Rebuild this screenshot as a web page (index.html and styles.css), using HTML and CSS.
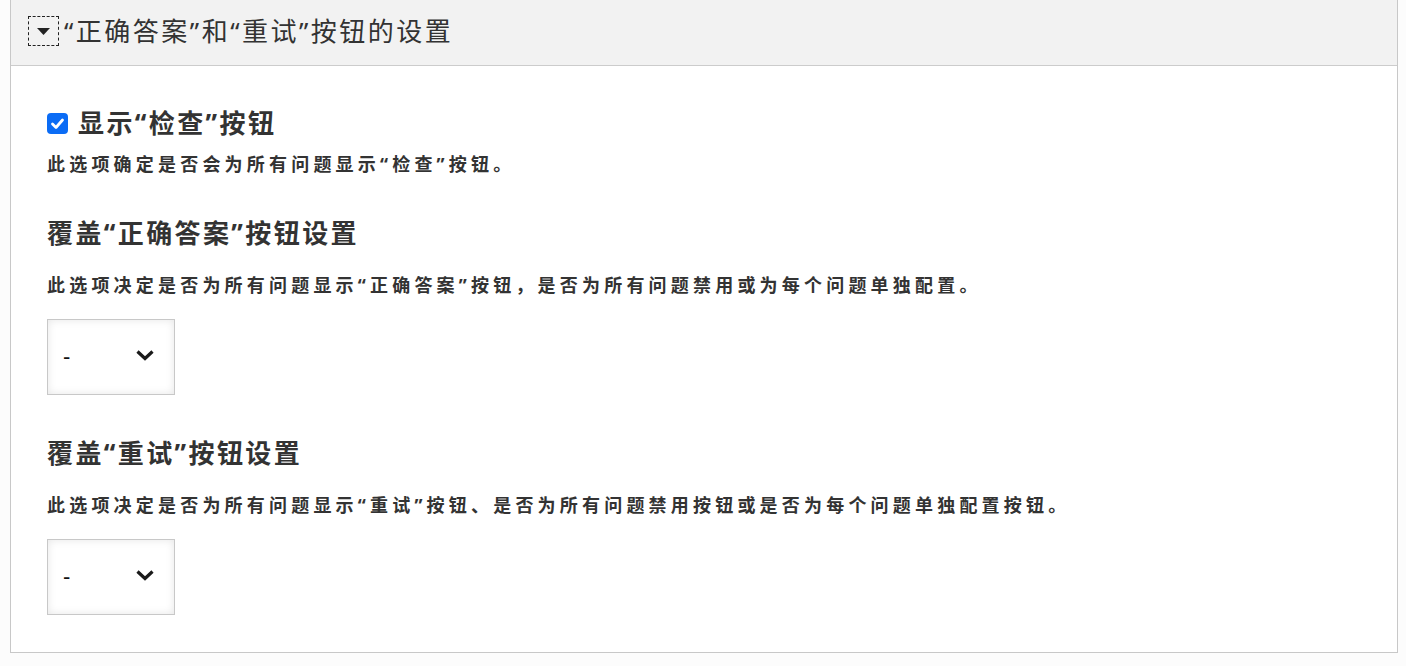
FILE: index.html
```html
<!DOCTYPE html>
<html lang="zh-CN">
<head>
<meta charset="utf-8">
<link rel="stylesheet" href="styles.css">
</head>
<body>
<div class="panel">
  <div class="panel-head">
    <span class="toggle"><svg width="13" height="8" viewBox="0 0 13 8"><polygon points="0,0 13,0 6.5,7" fill="#222"/></svg></span>
    <span class="head-title">“正确答案”和“重试”按钮的设置</span>
  </div>
  <div class="panel-body">
    <div class="field field-check">
      <label class="check-label">
        <span class="checkbox"><svg width="21" height="21" viewBox="0 0 21 21"><rect x="0" y="0" width="21" height="21" rx="4" fill="#0b6cf5"/><polyline points="5.5,11 9,14.5 15.5,7" fill="none" stroke="#fff" stroke-width="2.8" stroke-linecap="round" stroke-linejoin="round"/></svg></span>
        <span class="title">显示“检查”按钮</span>
      </label>
      <p class="desc">此选项确定是否会为所有问题显示“检查”按钮。</p>
    </div>
    <div class="field">
      <div class="title">覆盖“正确答案”按钮设置</div>
      <p class="desc">此选项决定是否为所有问题显示“正确答案”按钮，是否为所有问题禁用或为每个问题单独配置。</p>
      <div class="select"><span class="select-value">-</span><svg class="chev" width="20" height="12" viewBox="0 0 20 12"><polyline points="2.5,2.5 10,9.5 17.5,2.5" fill="none" stroke="#1a1a1a" stroke-width="3.2" stroke-linejoin="miter"/></svg></div>
    </div>
    <div class="field">
      <div class="title">覆盖“重试”按钮设置</div>
      <p class="desc">此选项决定是否为所有问题显示“重试”按钮、是否为所有问题禁用按钮或是否为每个问题单独配置按钮。</p>
      <div class="select"><span class="select-value">-</span><svg class="chev" width="20" height="12" viewBox="0 0 20 12"><polyline points="2.5,2.5 10,9.5 17.5,2.5" fill="none" stroke="#1a1a1a" stroke-width="3.2" stroke-linejoin="miter"/></svg></div>
    </div>
  </div>
</div>
</body>
</html>
```
FILE: styles.css
```css
html, body {
  margin: 0;
  padding: 0;
  background: #fcfcfc;
}
body {
  font-family: "Noto Sans", "Noto Sans CJK SC", sans-serif;
  color: #333;
}
.panel {
  margin: 0 8px 0 10px;
  height: 653px;
  box-sizing: border-box;
  border: 1px solid #c8c8c8;
  border-top: none;
  background: #fff;
}
.panel-head {
  height: 66px;
  box-sizing: border-box;
  border-bottom: 1px solid #cccccc;
  background: #f2f2f2;
  display: flex;
  align-items: center;
  padding-left: 17px;
}
.toggle {
  width: 29px;
  height: 28px;
  border: 1px dashed #222;
  display: flex;
  align-items: center;
  justify-content: center;
  margin-right: 5px;
  margin-top: -3px;
}
.toggle svg { display: block; margin-top: 1px; }
.head-title {
  font-size: 26px;
  font-weight: 400;
  color: #333;
  letter-spacing: 2.5px;
  line-height: 36px;
  margin-top: -3px;
}
.panel-body {
  padding: 39px 0 0 36px;
  display: flex;
  flex-direction: column;
}
.field { margin-bottom: 40px; }
.check-label {
  display: flex;
  align-items: center;
  gap: 10px;
}
.field-check { margin-bottom: 38px; }
.checkbox { width: 21px; height: 21px; display: block; }
.checkbox svg { display: block; }
.title {
  font-size: 26px;
  font-weight: 700;
  letter-spacing: 2.4px;
  line-height: 36px;
  color: #333;
}
.desc {
  margin: 21px 0 0 0;
  font-size: 18px;
  font-weight: 700;
  letter-spacing: 4.2px;
  line-height: 26px;
  color: #333;
}
.field-check .desc { margin-top: 10px; }
.select {
  margin-top: 21px;
  width: 128px;
  height: 76px;
  box-sizing: border-box;
  border: 1px solid #c8c8c8;
  background: #fff;
  box-shadow: inset 0 0 8px rgba(0,0,0,0.10);
  display: flex;
  align-items: center;
  padding-left: 15px;
  position: relative;
}
.select-value {
  font-family: "Liberation Sans", sans-serif;
  font-size: 22px;
  color: #111;
}
.chev { position: absolute; left: 87px; top: 29px; }
```
